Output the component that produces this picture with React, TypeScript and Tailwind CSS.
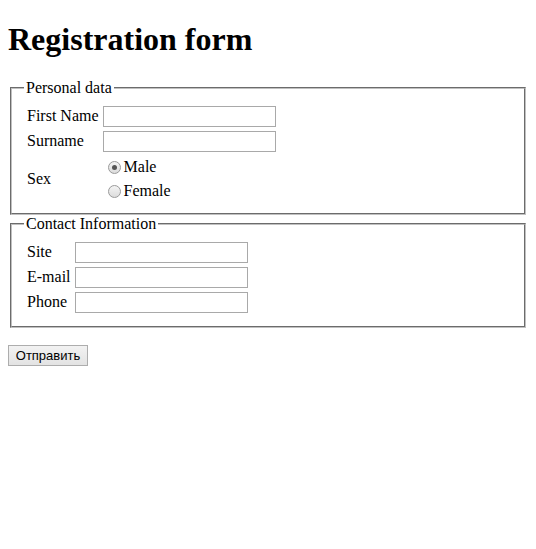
function Radio({ checked }: { checked?: boolean }) {
  return (
    <span className="ml-[5px] mr-[3px] flex h-[13px] w-[13px] items-center justify-center rounded-full border border-[#9a9a9a] bg-gradient-to-b from-[#f4f4f4] to-[#dcdcdc]">
      {checked && <span className="h-[5px] w-[5px] rounded-full bg-[#555]" />}
    </span>
  )
}

function TextInput() {
  return <input type="text" className="block h-[21px] w-[173px] border border-[#a9a9a9] bg-white px-[2px] text-[13px]" />
}

export default function App() {
  return (
    <div className="min-h-[549px] bg-white px-2 pb-2 font-['Liberation_Serif',serif] text-base leading-[1.15] text-black">
      <h1 className="mt-[21px] mb-[21px] text-[32px] font-bold leading-[37px]">Registration form</h1>

      {/* Personal data */}
      <fieldset className="mx-[2px] border-2 border-[#c0c0c0] px-3 pt-[6px] pb-[8px] [border-style:groove]">
        <legend className="px-[2px] leading-[18px]">Personal data</legend>
        <table className="border-separate border-spacing-0.5">
          <tbody>
            <tr>
              <td className="p-px">First Name</td>
              <td className="p-px"><TextInput /></td>
            </tr>
            <tr>
              <td className="p-px">Surname</td>
              <td className="p-px"><TextInput /></td>
            </tr>
            <tr>
              <td className="p-px">Sex</td>
              <td className="p-px">
                <div className="flex flex-col gap-[2px]">
                  <label className="flex h-[22px] items-center">
                    <Radio checked />
                    Male
                  </label>
                  <label className="flex h-[22px] items-center">
                    <Radio />
                    Female
                  </label>
                </div>
              </td>
            </tr>
          </tbody>
        </table>
      </fieldset>

      {/* Contact Information */}
      <fieldset className="mx-[2px] border-2 border-[#c0c0c0] px-3 pt-[6px] pb-[10px] [border-style:groove]">
        <legend className="px-[2px] leading-[18px]">Contact Information</legend>
        <table className="border-separate border-spacing-0.5">
          <tbody>
            <tr>
              <td className="p-px">Site</td>
              <td className="p-px"><TextInput /></td>
            </tr>
            <tr>
              <td className="p-px">E-mail</td>
              <td className="p-px"><TextInput /></td>
            </tr>
            <tr>
              <td className="p-px">Phone</td>
              <td className="p-px"><TextInput /></td>
            </tr>
          </tbody>
        </table>
      </fieldset>

      <button className="mt-[17px] h-[21px] w-[80px] border border-[#adadad] bg-gradient-to-b from-[#f2f2f2] to-[#e3e3e3] font-['Liberation_Sans',sans-serif] text-[13px] leading-none">
        Отправить
      </button>
    </div>
  )
}
